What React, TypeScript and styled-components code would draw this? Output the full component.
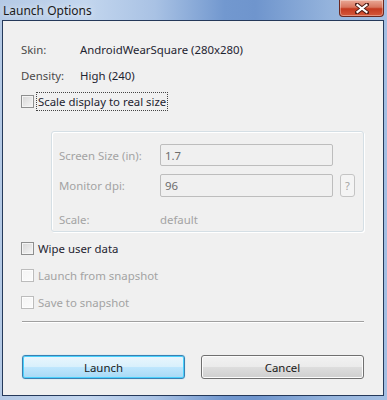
import styled, { createGlobalStyle } from "styled-components";

const GlobalStyle = createGlobalStyle`
  html, body {
    margin: 0;
    padding: 0;
    background: #ffffff;
  }
  body {
    font-family: "Noto Sans", "Open Sans", sans-serif;
    font-size: 11.4px;
  }
`;

const Window = styled.div`
  width: 387px;
  height: 400px;
  box-sizing: border-box;
  display: flex;
  flex-direction: column;
  background: linear-gradient(
    90deg,
    #b4c9e5 0%,
    #c3d6ee 22%,
    #a9c2e4 40%,
    #7298cf 58%,
    #6f95cd 66%,
    #94b3dc 85%,
    #a4bfe3 100%
  );
  padding: 0 3px 4px 2px;
`;

const TitleBar = styled.div`
  height: 22px;
  display: flex;
  align-items: flex-start;
  justify-content: space-between;
`;

const Title = styled.div`
  padding: 2px 0 0 1px;
  font-size: 12px;
  color: #1a1a1a;
  text-shadow: 0 0 6px rgba(255, 255, 255, 0.9);
`;

const CloseButton = styled.div`
  width: 45px;
  height: 17px;
  box-sizing: border-box;
  border: 1px solid #6b2820;
  border-top: none;
  border-radius: 0 0 4px 4px;
  background: linear-gradient(180deg, #eaa997 0%, #d8765f 45%, #c43a20 55%, #d5583a 100%);
  box-shadow: inset 0 0 0 1px rgba(255, 255, 255, 0.35);
  display: flex;
  align-items: center;
  justify-content: center;
`;

const Client = styled.div`
  flex: 1;
  border: 1px solid #25395a;
  background: #f0f0f0;
  padding: 15px 18px 16px 18px;
  display: flex;
  flex-direction: column;
`;

const InfoRow = styled.div`
  height: 26px;
  display: flex;
  align-items: center;
`;

const InfoLabel = styled.div`
  width: 59px;
  color: #4a4a4a;
`;

const InfoValue = styled.div`
  color: #1e2430;
`;

const CheckRow = styled.div<{ $height?: number }>`
  height: ${(p) => p.$height ?? 27}px;
  display: flex;
  align-items: center;
`;

const Box = styled.div<{ $disabled?: boolean }>`
  width: 13px;
  height: 13px;
  box-sizing: border-box;
  border: 1px solid ${(p) => (p.$disabled ? "#bcbcbc" : "#8e8f8f")};
  background: ${(p) =>
    p.$disabled
      ? "linear-gradient(135deg, #f4f4f4, #fbfbfb)"
      : "linear-gradient(135deg, #d6d6d6, #f6f6f6)"};
  box-shadow: inset 0 0 0 1px ${(p) => (p.$disabled ? "#fdfdfd" : "#f4f4f4")};
  margin-right: 2px;
`;

const CheckText = styled.span<{ $disabled?: boolean; $focused?: boolean }>`
  color: ${(p) => (p.$disabled ? "#a3a3a3" : "#1e2430")};
  padding: 1px 1px;
  border: 1px dotted ${(p) => (p.$focused ? "#444" : "transparent")};
`;

const GroupBox = styled.div`
  margin: 17px 1px 0 30px;
  border: 1px solid #d5dfe5;
  border-radius: 3px;
  box-shadow: inset 1px 1px 0 #ffffff, 1px 1px 0 #ffffff;
  padding: 12px 7px 4px 7px;
  display: grid;
  grid-template-columns: 101px 173px 22px;
  grid-template-rows: 22px 23px 22px;
  row-gap: 8px;
  align-items: center;
`;

const FieldLabel = styled.div`
  color: #a3a3a3;
`;

const Field = styled.div`
  height: 100%;
  box-sizing: border-box;
  border: 1px solid #bdbdbd;
  border-radius: 2px;
  background: #f0f0f0;
  color: #6d6d6d;
  display: flex;
  align-items: center;
  padding-left: 4px;
`;

const HelpButton = styled.div`
  justify-self: end;
  width: 15px;
  height: 23px;
  box-sizing: border-box;
  border: 1px solid #c4c4c4;
  border-radius: 3px;
  background: #f4f4f4;
  color: #a3a3a3;
  display: flex;
  align-items: center;
  justify-content: center;
  font-size: 11px;
`;

const ScaleRow = styled.div`
  grid-column: 1 / -1;
  display: flex;
  align-self: end;
  margin-top: -4px;
  color: #a3a3a3;
`;

const ScaleLabel = styled.div`
  width: 101px;
`;

const Checks = styled.div`
  margin-top: 3px;
  display: flex;
  flex-direction: column;
`;

const Separator = styled.div`
  margin: 5px 1px 0 1px;
  height: 1px;
  background: #a0a0a0;
  border-bottom: 1px solid #ffffff;
`;

const ButtonRow = styled.div`
  margin: 32px 1px 0 1px;
  display: flex;
  justify-content: space-between;
`;

const Button = styled.div<{ $default?: boolean }>`
  width: 163px;
  height: 24px;
  box-sizing: border-box;
  border-radius: 3px;
  border: 1px solid ${(p) => (p.$default ? "#3c7fb1" : "#707070")};
  background: ${(p) =>
    p.$default
      ? "linear-gradient(180deg, #eaf6fd 0%, #d9f0fc 48%, #bee6fd 52%, #a7d9f5 100%)"
      : "linear-gradient(180deg, #f2f2f2 0%, #ebebeb 48%, #dddddd 52%, #cfcfcf 100%)"};
  box-shadow: ${(p) =>
    p.$default
      ? "inset 0 0 0 1px #48d1fd, 0 0 1px #5fd0ff"
      : "inset 0 0 0 1px #fcfcfc"};
  display: flex;
  align-items: center;
  justify-content: center;
  color: #1a1a1a;
`;

function CloseGlyph() {
  return (
    <svg width="14" height="11" viewBox="0 0 14 11">
      <path
        d="M2 1.5 L12 9.5 M12 1.5 L2 9.5"
        stroke="#4a1a14"
        strokeWidth="4"
        strokeLinecap="square"
      />
      <path
        d="M2.5 2 L11.5 9 M11.5 2 L2.5 9"
        stroke="#ffffff"
        strokeWidth="2.2"
        strokeLinecap="square"
      />
    </svg>
  );
}

export default function App() {
  return (
    <Window>
      <GlobalStyle />
      <TitleBar>
        <Title>Launch Options</Title>
        <CloseButton>
          <CloseGlyph />
        </CloseButton>
      </TitleBar>
      <Client>
        <InfoRow>
          <InfoLabel>Skin:</InfoLabel>
          <InfoValue>AndroidWearSquare (280x280)</InfoValue>
        </InfoRow>
        <InfoRow>
          <InfoLabel>Density:</InfoLabel>
          <InfoValue>High (240)</InfoValue>
        </InfoRow>
        <CheckRow $height={26}>
          <Box />
          <CheckText $focused>Scale display to real size</CheckText>
        </CheckRow>

        <GroupBox>
          <FieldLabel>Screen Size (in):</FieldLabel>
          <Field>1.7</Field>
          <span />
          <FieldLabel>Monitor dpi:</FieldLabel>
          <Field>96</Field>
          <HelpButton>?</HelpButton>
          <ScaleRow>
            <ScaleLabel>Scale:</ScaleLabel>
            <div>default</div>
          </ScaleRow>
        </GroupBox>

        <Checks>
          <CheckRow>
            <Box />
            <CheckText>Wipe user data</CheckText>
          </CheckRow>
          <CheckRow>
            <Box $disabled />
            <CheckText $disabled>Launch from snapshot</CheckText>
          </CheckRow>
          <CheckRow>
            <Box $disabled />
            <CheckText $disabled>Save to snapshot</CheckText>
          </CheckRow>
        </Checks>

        <Separator />

        <ButtonRow>
          <Button $default>Launch</Button>
          <Button>Cancel</Button>
        </ButtonRow>
      </Client>
    </Window>
  );
}
